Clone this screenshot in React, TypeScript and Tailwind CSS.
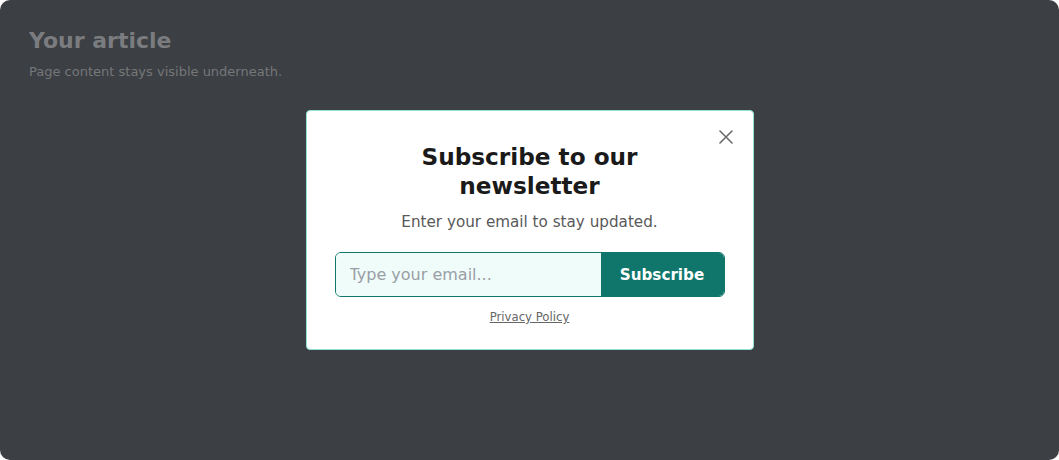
import { useState } from "react";

// Newsletter popup shown over a dimmed article page
export default function App() {
  const [email, setEmail] = useState("");

  return (
    <div className="min-h-screen bg-white font-['DejaVu_Sans',sans-serif]">
      <div className="relative h-[460px] w-full overflow-hidden rounded-[10px] bg-[#3c3f43]">
        {/* Page underneath */}
        <div className="px-[29px] pt-[27px]">
          <h1 className="text-[22px] font-bold leading-[28px] text-[#7a7c7f]">Your article</h1>
          <p className="mt-[8px] text-[13px] leading-[18px] text-[#75777a]">
            Page content stays visible underneath.
          </p>
        </div>

        {/* Modal */}
        <div className="absolute left-1/2 top-[110px] w-[448px] -translate-x-1/2 rounded-[4px] border border-[#8fe3d3] bg-white px-[28px] pb-[24px] pt-[31px] text-center">
          <button
            aria-label="Close"
            className="absolute right-[20px] top-[19px] flex h-[14px] w-[14px] items-center justify-center text-[#6b6b6b]"
          >
            <svg width="14" height="14" viewBox="0 0 14 14" fill="none" stroke="currentColor" strokeWidth="1.6" strokeLinecap="round">
              <path d="M1 1L13 13M13 1L1 13" />
            </svg>
          </button>

          <h2 className="mx-auto max-w-[300px] text-[23.2px] font-bold leading-[29px] text-[#1a1a1a]">
            Subscribe to our newsletter
          </h2>
          <p className="mt-[11px] text-[15.2px] leading-[22px] text-[#595959]">
            Enter your email to stay updated.
          </p>

          <form
            className="mt-[19px] flex h-[45px] overflow-hidden rounded-[6px] border border-[#10766c]"
            onSubmit={(e) => e.preventDefault()}
          >
            <input
              type="email"
              value={email}
              onChange={(e) => setEmail(e.target.value)}
              placeholder="Type your email..."
              className="min-w-0 flex-1 bg-[#effcfa] pl-[14px] text-[16px] text-[#1a1a1a] outline-none placeholder:text-[#9a9ea5]"
            />
            <button type="submit" className="w-[123px] bg-[#10766c] pt-[1px] text-[15.2px] font-bold text-white">
              Subscribe
            </button>
          </form>

          <div className="mt-[12px] text-[11.7px] leading-[16px]">
            <a href="#" className="text-[#666] underline">
              Privacy Policy
            </a>
          </div>
        </div>
      </div>
    </div>
  );
}
